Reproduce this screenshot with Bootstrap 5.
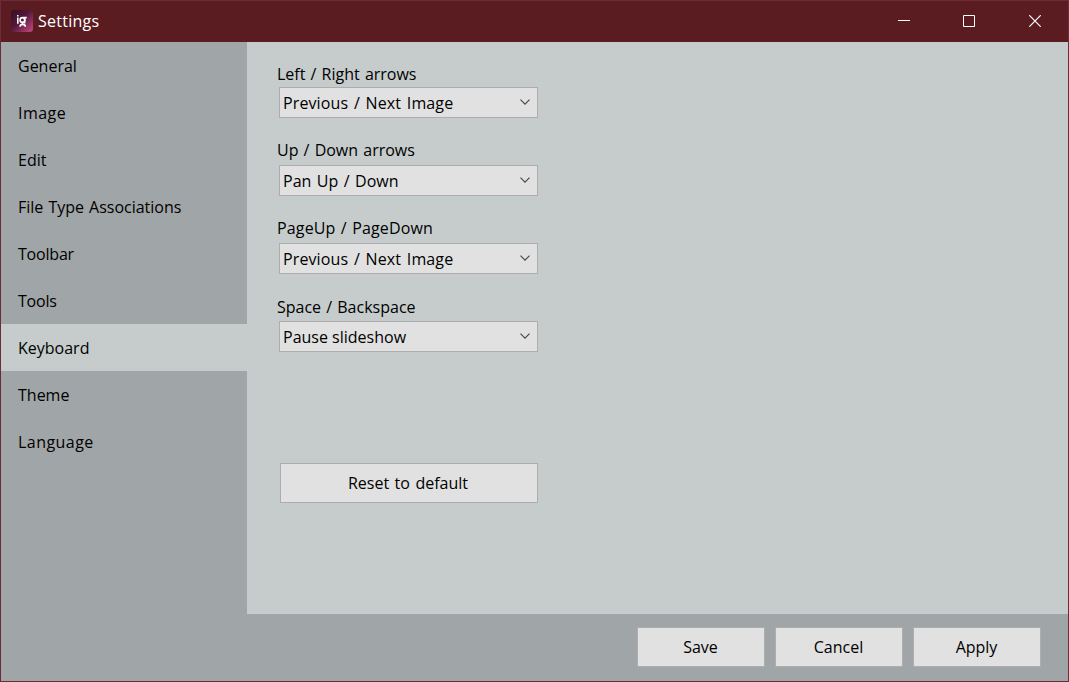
<!DOCTYPE html>
<html lang="en">
<head>
<meta charset="utf-8">
<meta name="viewport" content="width=device-width, initial-scale=1">
<title>Settings</title>
<link href="https://cdn.jsdelivr.net/npm/bootstrap@5.3.0/dist/css/bootstrap.min.css" rel="stylesheet">
<style>
body{font-family:"Open Sans","Noto Sans",sans-serif;font-size:16px;line-height:24px;color:#000;background:#a0a5a7}
.window{border:1px solid #6c2c35;background:#a0a5a7}
.titlebar{height:41px;background:#5b1c21;color:#fff;padding-left:10px}
.titlebar .caption{letter-spacing:.25px;margin-left:5px;padding-bottom:2px}
.logo{margin-bottom:2px}
.win-btn{width:66px;height:39px;background:none;border:0;padding:0;line-height:0}
.win-btn.min{width:64px}
.side{width:246px;flex:none;word-spacing:.9px}
.side .list-group-item{height:47px;padding:0 17px;background:none;border:0;color:#000;display:flex;align-items:center}
.side .list-group-item.active{background:#c6cccc;color:#000;margin:0}
.side .loose{letter-spacing:.45px}
.side .tight{letter-spacing:-.2px}
.pane{background:#c6cccc;height:572px;padding:20px 0 0 30px}
.field{width:261px;height:78px;padding-bottom:3px}
.field .form-label{height:24px;margin:0;display:block;word-spacing:1px}
.field-3 .form-label{letter-spacing:.15px}
.gap-low{gap:3px}
.gap-mid{gap:2px}
.gap-top{gap:1px}
.field-1{height:76px}
.field-3{height:79px}
.field-4{height:76px}
.combo{width:259px;height:31px;flex:none;margin-left:2px;padding:0 7px 0 3px;background:#e1e1e1;border:1px solid #adadad;border-radius:0;color:#000}
.combo .long{word-spacing:1.4px;letter-spacing:.12px}
.combo .mid{word-spacing:1.3px}
.combo svg{margin-bottom:1px}
.push{background:#e1e1e1;border:1px solid #adadad;border-radius:0;color:#000;font-size:inherit;padding:0}
.reset{width:258px;height:40px;margin:92px 0 0 3px;padding-right:2px;word-spacing:1.3px}
.footer-bar{padding:13px 27px 0 0;gap:10px}
.footer-bar .push{width:128px;height:40px;padding-right:1px}
</style>
<script src="https://cdn.jsdelivr.net/npm/bootstrap@5.3.0/dist/js/bootstrap.bundle.min.js"></script>
</head>
<body>
<div class="window vh-100 d-flex flex-column overflow-hidden">
  <header class="titlebar d-flex align-items-center flex-shrink-0">
    <svg class="logo" width="22" height="22" viewBox="0 0 22 22" aria-hidden="true">
      <defs><linearGradient id="g" x1="0" y1="0" x2="1" y2="1"><stop offset="0" stop-color="#32101f"/><stop offset=".45" stop-color="#54183a"/><stop offset="1" stop-color="#c94a80"/></linearGradient></defs>
      <rect width="22" height="22" rx="3.5" fill="url(#g)"/>
      <g fill="none" stroke="#fff" stroke-width="1.6"><path d="M6.8 7.5v6.3M6.8 5v1.4"/><circle cx="11.5" cy="10" r="2.4"/><path d="M12.5 7.6h3.2M13.6 9v4.6M11.5 12.4v1.6M9 16.8c.2-3.2 5.2-3.2 5.4 0"/></g>
    </svg>
    <span class="caption">Settings</span>
    <div class="d-flex ms-auto align-self-start">
      <button class="win-btn min" aria-label="Minimize"><svg width="12" height="12"><path d="M0 5.5h12" stroke="#fff"/></svg></button>
      <button class="win-btn" aria-label="Maximize"><svg width="12" height="12"><path d="M.5.5h11v11H.5z" fill="none" stroke="#fff"/></svg></button>
      <button class="win-btn" aria-label="Close"><svg width="12" height="12"><path d="M.3.3l11.4 11.4M11.7.3L.3 11.7" stroke="#fff" stroke-width="1.2"/></svg></button>
    </div>
  </header>
  <main class="d-flex flex-shrink-0">
    <nav class="side list-group list-group-flush">
      <a class="list-group-item">General</a>
      <a class="list-group-item loose">Image</a>
      <a class="list-group-item">Edit</a>
      <a class="list-group-item">File Type Associations</a>
      <a class="list-group-item tight">Toolbar</a>
      <a class="list-group-item tight">Tools</a>
      <a class="list-group-item active">Keyboard</a>
      <a class="list-group-item">Theme</a>
      <a class="list-group-item loose">Language</a>
    </nav>
    <section class="pane flex-grow-1">
      <div class="field field-1 d-flex flex-column gap-top"><span class="form-label">Left / Right arrows</span>
        <div class="combo d-flex align-items-center justify-content-between"><span class="long">Previous / Next Image</span><svg width="10" height="6"><path d="M.5.6L5 5.1 9.5.6" fill="none" stroke="#444" stroke-width="1.1"/></svg></div></div>
      <div class="field d-flex flex-column gap-low"><span class="form-label">Up / Down arrows</span>
        <div class="combo d-flex align-items-center justify-content-between"><span class="mid">Pan Up / Down</span><svg width="10" height="6"><path d="M.5.6L5 5.1 9.5.6" fill="none" stroke="#444" stroke-width="1.1"/></svg></div></div>
      <div class="field field-3 d-flex flex-column gap-low"><span class="form-label">PageUp / PageDown</span>
        <div class="combo d-flex align-items-center justify-content-between"><span class="long">Previous / Next Image</span><svg width="10" height="6"><path d="M.5.6L5 5.1 9.5.6" fill="none" stroke="#444" stroke-width="1.1"/></svg></div></div>
      <div class="field field-4 d-flex flex-column gap-mid"><span class="form-label">Space / Backspace</span>
        <div class="combo d-flex align-items-center justify-content-between"><span>Pause slideshow</span><svg width="10" height="6"><path d="M.5.6L5 5.1 9.5.6" fill="none" stroke="#444" stroke-width="1.1"/></svg></div></div>
      <button class="btn push reset">Reset to default</button>
    </section>
  </main>
  <footer class="footer-bar d-flex justify-content-end">
    <button class="btn push">Save</button>
    <button class="btn push">Cancel</button>
    <button class="btn push">Apply</button>
  </footer>
</div>
</body>
</html>
